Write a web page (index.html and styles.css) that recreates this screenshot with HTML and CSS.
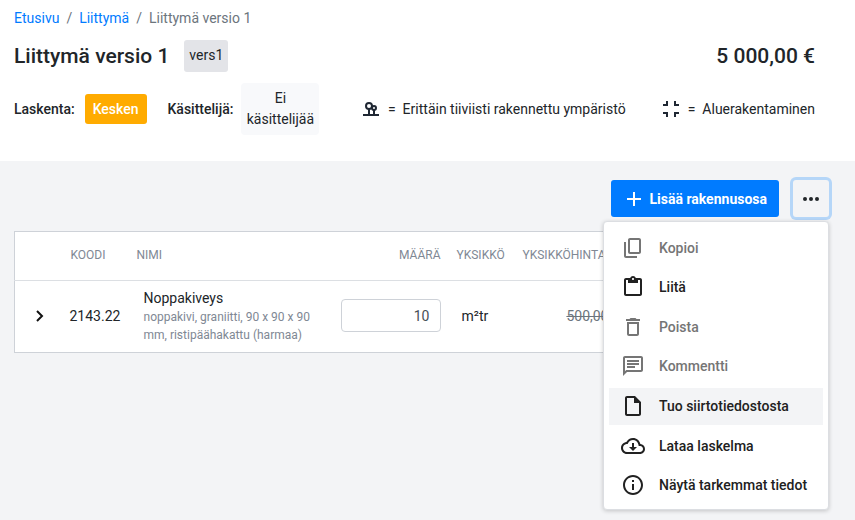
FILE: index.html
```html
<!DOCTYPE html>
<html lang="fi">
<head>
<meta charset="utf-8">
<meta name="viewport" content="width=device-width, initial-scale=1">
<title>Liittymä versio 1</title>
<link rel="stylesheet" href="styles.css">
</head>
<body>
<header class="header">
  <nav class="crumbs" aria-label="Murupolku">
    <a href="#">Etusivu</a><span class="sep">/</span><a href="#">Liittymä</a><span class="sep">/</span><span>Liittymä versio 1</span>
  </nav>
  <div class="title-row">
    <h1>Liittymä versio 1</h1>
    <span class="tag">vers1</span>
    <strong class="total">5 000,00 €</strong>
  </div>
  <div class="info-row">
    <span class="label">Laskenta:</span>
    <button class="status" type="button">Kesken</button>
    <span class="label handler-label">Käsittelijä:</span>
    <button class="handler" type="button">Ei käsittelijää</button>
    <div class="legend">
      <span class="legend-item">
        <svg width="16" height="16" viewBox="0 0 16 16" fill="none" stroke="#1f2733" stroke-width="2"><circle cx="6" cy="5" r="3"/><circle cx="11" cy="7" r="2"/><path d="M6 8v5M11 9v4M0 14h16"/></svg>
        <span>=</span><span>Erittäin tiiviisti rakennettu ympäristö</span>
      </span>
      <span class="legend-item">
        <svg width="16" height="16" viewBox="0 0 16 16" fill="none" stroke="#1f2733" stroke-width="2"><path d="M0 4h4V0M12 0v4h4M0 12h4v4M12 16v-4h4"/></svg>
        <span>=</span><span>Aluerakentaminen</span>
      </span>
    </div>
  </div>
</header>
<main class="content">
  <div class="toolbar">
    <button class="add" type="button">
      <svg width="16" height="16" viewBox="0 0 16 16" fill="none" stroke="#fff" stroke-width="2"><path d="M8 1v14M1 8h14"/></svg>
      Lisää rakennusosa
    </button>
    <div class="more-wrap">
      <button class="more" type="button" aria-label="Lisää toimintoja">
        <svg width="16" height="6" viewBox="0 0 16 6" fill="#212529"><circle cx="2" cy="3" r="2"/><circle cx="8" cy="3" r="2"/><circle cx="14" cy="3" r="2"/></svg>
      </button>
      <div class="menu">
        <button type="button" disabled><svg viewBox="0 0 24 24"><path d="M16 22H5c-1.100 0-2-.9-2-2V6h2v14h11v2zM18 2H9c-1.100 0-2 .9-2 2v12c0 1.100.9 2 2 2h9c1.100 0 2-.9 2-2V4c0-1.100-.9-2-2-2zm0 14H9V4h9v12z"/></svg>Kopioi</button>
        <button type="button"><svg viewBox="0 0 24 24"><path d="M19 3h-4.180C14.400 1.840 13.300 1 12 1S9.600 1.840 9.180 3H5c-1.100 0-2 .9-2 2v14c0 1.100.9 2 2 2h14c1.100 0 2-.9 2-2V5c0-1.100-.9-2-2-2zm-7 0c.55 0 1 .45 1 1s-.45 1-1 1-1-.45-1-1 .45-1 1-1zm7 16H5V5h2v3h10V5h2v14z"/></svg>Liitä</button>
        <button type="button" disabled><svg viewBox="0 0 24 24"><path d="M6 19c0 1.100.9 2 2 2h8c1.100 0 2-.9 2-2V7H6v12zM8 9h8v10H8V9zm7.500-5l-1-1h-5l-1 1H5v2h14V4z"/></svg>Poista</button>
        <button type="button" disabled><svg viewBox="0 0 24 24"><path d="M4 4h16v12H5.170L4 17.170V4m0-2c-1.100 0-1.990.9-1.990 2L2 22l4-4h14c1.100 0 2-.9 2-2V4c0-1.100-.9-2-2-2H4zm2 10h8v2H6v-2zm0-3h12v2H6V9zm0-3h12v2H6V6z"/></svg>Kommentti</button>
        <button type="button" class="active"><svg viewBox="0 0 24 24"><path d="M6 2c-1.100 0-2 .9-2 2v16c0 1.100.9 2 2 2h12c1.100 0 2-.9 2-2V8l-6-6H6zm0 2h7v5h5v11H6V4z"/></svg>Tuo siirtotiedostosta</button>
        <button type="button"><svg viewBox="0 0 24 24"><path d="M19.350 10.040C18.670 6.590 15.640 4 12 4 9.110 4 6.600 5.640 5.350 8.040 2.340 8.360 0 10.910 0 14c0 3.310 2.690 6 6 6h13c2.760 0 5-2.240 5-5 0-2.640-2.050-4.780-4.650-4.960zM19 18H6c-2.210 0-4-1.790-4-4 0-2.050 1.530-3.760 3.560-3.970l1.070-.11.5-.95C8.080 7.140 9.940 6 12 6c2.620 0 4.880 1.860 5.390 4.430l.3 1.500 1.530.11c1.560.1 2.780 1.410 2.780 2.960 0 1.650-1.350 3-3 3zM13 9h-2v4H8l4 4 4-4h-3z"/></svg>Lataa laskelma</button>
        <button type="button"><svg viewBox="0 0 24 24"><path d="M11 7h2v2h-2zm0 4h2v6h-2zm1-9C6.480 2 2 6.480 2 12s4.480 10 10 10 10-4.480 10-10S17.520 2 12 2zm0 18c-4.410 0-8-3.590-8-8s3.590-8 8-8 8 3.590 8 8-3.590 8-8 8z"/></svg>Näytä tarkemmat tiedot</button>
      </div>
    </div>
  </div>
  <table class="parts">
    <colgroup><col class="c-toggle"><col class="c-code"><col><col class="c-amount"><col class="c-unit"><col class="c-price"><col class="c-sum"></colgroup>
    <thead>
      <tr><th></th><th>KOODI</th><th>NIMI</th><th class="num">MÄÄRÄ</th><th>YKSIKKÖ</th><th class="num">YKSIKKÖHINTA</th><th></th></tr>
    </thead>
    <tbody>
      <tr>
        <td class="toggle"><button type="button" aria-label="Avaa"><svg width="10" height="12" viewBox="0 0 10 12" fill="none" stroke="#111" stroke-width="2"><path d="M2 1l5 5-5 5"/></svg></button></td>
        <td class="code">2143.22</td>
        <td class="name"><div>Noppakiveys</div><small>noppakivi, graniitti, 90 x 90 x 90 mm, ristipäähakattu (harmaa)</small></td>
        <td class="amount"><input type="text" value="10" aria-label="Määrä"></td>
        <td class="unit">m²tr</td>
        <td class="price"><s>500,00</s></td>
        <td></td>
      </tr>
    </tbody>
  </table>
</main>
</body>
</html>
```
FILE: styles.css
```css
* { box-sizing: border-box; }
body {
  margin: 0;
  min-height: 100vh;
  background: #f3f4f6;
  color: #212529;
  font: 14px/20px Roboto, "Liberation Sans", sans-serif;
}
button, input { font: inherit; color: inherit; margin: 0; }
button { border: 0; background: none; padding: 0; cursor: pointer; }
svg { flex: none; display: block; }

.header { background: #fff; padding: 8px 40px 26px 14px; }
.crumbs { color: #6c757d; }
.crumbs a { color: #007bff; text-decoration: none; }
.sep { padding: 0 7px; }

.title-row { display: flex; align-items: center; margin-top: 11px; }
h1, .total { margin: 0; font-size: 21px; line-height: 34px; font-weight: 500; }
.tag {
  margin-left: 15px;
  padding: 5px 5px 7px;
  border-radius: 3px;
  background: #e3e4e8;
}
.total { margin-left: auto; }

.info-row { display: flex; align-items: center; margin-top: 10px; }
.label { font-weight: 500; }
.status {
  margin-left: 10px;
  padding: 5px 8px;
  border-radius: 3px;
  background: #ffab00;
  color: #fff;
  font-weight: 500;
}
.handler-label { margin-left: 21px; }
.handler {
  width: 78px;
  margin-left: 8px;
  padding: 5px;
  border-radius: 4px;
  background: #f8f9fb;
  line-height: 21px;
}
.legend { display: flex; flex: 1; justify-content: flex-end; gap: 37px; }
.legend-item { display: flex; align-items: center; gap: 7px; white-space: nowrap; }
.legend-item svg { margin-right: 2px; }

.content { padding: 19px 26px 20px 14px; }
.toolbar { display: flex; justify-content: flex-end; gap: 14px; }
.add {
  display: flex;
  align-items: center;
  gap: 7px;
  height: 37px;
  padding: 0 12px 0 15px;
  border-radius: 3px;
  background: #007bff;
  color: #fff;
  font-weight: 700;
}
.more-wrap { position: relative; }
.more {
  display: flex;
  align-items: center;
  justify-content: center;
  width: 36px;
  height: 37px;
  border-radius: 3px;
  background: #f3f4f6;
  box-shadow: 0 0 0 3px #b5d6f8;
}
.menu {
  position: absolute;
  z-index: 2;
  top: 41px;
  right: 0;
  display: flex;
  flex-direction: column;
  justify-content: space-between;
  width: 226px;
  height: 289px;
  padding: 7px 5px 5px;
  border: 1px solid #dcdee2;
  border-radius: 4px;
  background: #fff;
  box-shadow: 0 1px 4px rgba(0, 0, 0, .2);
}
.menu button {
  display: flex;
  align-items: center;
  gap: 14px;
  height: 37px;
  padding: 0 12px;
  color: #212121;
  font-weight: 500;
  white-space: nowrap;
}
.menu button:disabled { color: #757575; }
.menu .active { background: #f3f4f6; }
.menu svg { width: 24px; height: 24px; fill: currentColor; }

.parts {
  width: 100%;
  margin-top: 14px;
  border: 1px solid #ced2d8;
  border-collapse: collapse;
  table-layout: fixed;
  background: #fff;
}
.c-toggle { width: 48px; }
.c-code { width: 66px; }
.c-amount { width: 116px; }
.c-unit { width: 66px; }
.c-price { width: 98px; }
.c-sum { width: 216px; }
th {
  height: 49px;
  padding: 0 8px 2px;
  border-bottom: 1px solid #dcdfe3;
  color: #808894;
  font-size: 12px;
  font-weight: 400;
  line-height: 18px;
  text-align: left;
}
td { height: 72px; padding: 0 8px 2px; }
.parts .num { text-align: right; }
.toggle button { display: block; margin-left: 12px; }
.parts .code { padding-left: 7px; padding-right: 0; }
.parts .name { padding-left: 15px; padding-right: 0; }
.name small { display: block; color: #808894; font-size: 12px; line-height: 18px; }
.amount input {
  display: block;
  width: 100%;
  height: 33px;
  padding: 0 10px;
  border: 1px solid #ced2d8;
  border-radius: 4px;
  background: #fff;
  color: #495057;
  text-align: right;
}
.parts .unit { padding-left: 13px; }
.parts .price { padding-right: 4px; text-align: right; }
s { color: #6c757d; }
```
